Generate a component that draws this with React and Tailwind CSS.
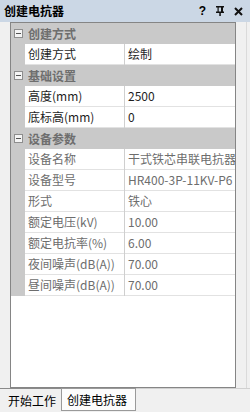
import React from "react";

const font = { fontFamily: '"Noto Sans CJK SC", "Noto Sans", sans-serif' };

function Minus() {
  return (
    <div className="w-[14px] flex items-center justify-center">
      <div className="w-[9px] h-[9px] border border-[#8e8e8e] bg-[#f4f4f4] flex items-center justify-center">
        <div className="w-[5px] h-px bg-[#555]" />
      </div>
    </div>
  );
}

function Cat({ title }) {
  return (
    <div className="flex h-[21px] bg-[#c9c9c9] items-center">
      <Minus />
      <div className="pl-[3px] text-[12px] font-bold text-[#6e6e6e] leading-none">{title}</div>
    </div>
  );
}

function Item({ name, value, ro }) {
  const c = ro ? "text-[#6d6d6d]" : "text-[#1e1e1e]";
  return (
    <div className="flex h-[21px]">
      <div className="w-[14px] bg-[#c9c9c9]" />
      <div className={`w-[99px] bg-white border-b border-[#e2e2e2] flex items-center pl-[3px] text-[12px] whitespace-nowrap overflow-hidden ${c}`}>
        {name}
      </div>
      <div className="w-px bg-[#cfcfcf]" />
      <div className={`w-[110px] bg-white border-b border-[#e2e2e2] flex items-center pl-[3px] text-[12px] whitespace-nowrap overflow-hidden ${c}`}>
        {value}
      </div>
    </div>
  );
}

export default function App() {
  return (
    <div className="w-[250px] h-[412px] bg-[#f0f0f0] flex flex-col overflow-hidden" style={font}>
      <div className="h-[22px] bg-[#cbd7e5] flex items-center justify-between pl-[4px] pr-[7px]">
        <div className="text-[12px] font-bold text-black leading-none">创建电抗器</div>
        <div className="flex items-center gap-[10px]">
          <span className="text-[12px] font-bold text-black leading-none" style={{ fontFamily: '"Liberation Sans", sans-serif' }}>?</span>
          <svg width="8" height="10" viewBox="0 0 8 10">
            <rect x="0" y="0" width="8" height="1.5" fill="#111" />
            <rect x="1.5" y="1" width="1.2" height="5" fill="#111" />
            <rect x="5" y="1" width="2" height="5" fill="#111" />
            <rect x="0" y="5.5" width="8" height="1.5" fill="#111" />
            <rect x="3.3" y="6" width="1.5" height="4" fill="#111" />
          </svg>
          <svg width="9" height="9" viewBox="0 0 9 9">
            <path d="M1 1 L8 8 M8 1 L1 8" stroke="#111" strokeWidth="2" />
          </svg>
        </div>
      </div>
      <div className="flex-1 flex pl-[10px] pr-[3px]">
        <div className="w-[226px] border border-[#858585] bg-white flex flex-col">
          <Cat title="创建方式" />
          <Item name="创建方式" value="绘制" />
          <Cat title="基础设置" />
          <Item name="高度(mm)" value="2500" />
          <Item name="底标高(mm)" value="0" />
          <Cat title="设备参数" />
          <Item ro name="设备名称" value="干式铁芯串联电抗器" />
          <Item ro name="设备型号" value="HR400-3P-11KV-P6" />
          <Item ro name="形式" value="铁心" />
          <Item ro name="额定电压(kV)" value="10.00" />
          <Item ro name="额定电抗率(%)" value="6.00" />
          <Item ro name="夜间噪声(dB(A))" value="70.00" />
          <Item ro name="昼间噪声(dB(A))" value="70.00" />
          <div className="flex-1 bg-white" />
        </div>
        <div className="flex-1" />
        <div className="w-px bg-[#dadada]" />
      </div>
      <div className="h-[24px] flex items-stretch">
        <div className="w-[61px] border-t border-[#8a8a8a] flex items-center pl-[8px] text-[12px] text-black whitespace-nowrap">
          开始工作
        </div>
        <div className="w-[75px] h-[23px] bg-[#fcfcfc] border border-[#9a9a9a] flex items-center pl-[5px] text-[12px] text-black whitespace-nowrap">
          创建电抗器
        </div>
        <div className="flex-1 border-t border-[#d0d0d0]" />
      </div>
    </div>
  );
}
